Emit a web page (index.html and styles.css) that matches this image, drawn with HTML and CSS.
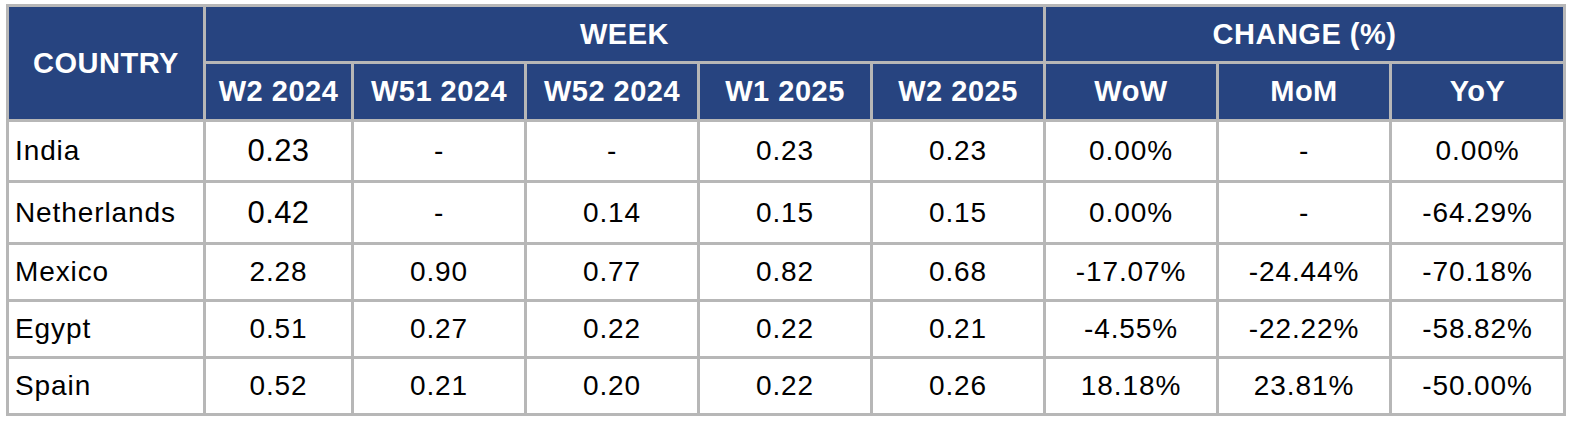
FILE: index.html
```html
<!DOCTYPE html>
<html lang="en">
<head>
<meta charset="utf-8">
<title>Weekly change by country</title>
<link rel="stylesheet" href="styles.css">
</head>
<body>
<table class="data">
  <colgroup>
    <col class="col-country">
    <col class="col-w1">
    <col class="col-w">
    <col class="col-w">
    <col class="col-w">
    <col class="col-w">
    <col class="col-w">
    <col class="col-w">
    <col class="col-last">
  </colgroup>
  <thead>
    <tr class="hr1">
      <th rowspan="2" class="country-h">COUNTRY</th>
      <th colspan="5">WEEK</th>
      <th colspan="3">CHANGE (%)</th>
    </tr>
    <tr class="hr2">
      <th>W2 2024</th>
      <th>W51 2024</th>
      <th>W52 2024</th>
      <th>W1 2025</th>
      <th>W2 2025</th>
      <th>WoW</th>
      <th>MoM</th>
      <th>YoY</th>
    </tr>
  </thead>
  <tbody>
    <tr class="tall-a">
      <td class="name">India</td>
      <td class="big">0.23</td>
      <td>-</td>
      <td>-</td>
      <td>0.23</td>
      <td>0.23</td>
      <td>0.00%</td>
      <td>-</td>
      <td>0.00%</td>
    </tr>
    <tr class="tall-b">
      <td class="name">Netherlands</td>
      <td class="big">0.42</td>
      <td>-</td>
      <td>0.14</td>
      <td>0.15</td>
      <td>0.15</td>
      <td>0.00%</td>
      <td>-</td>
      <td>-64.29%</td>
    </tr>
    <tr>
      <td class="name">Mexico</td>
      <td>2.28</td>
      <td>0.90</td>
      <td>0.77</td>
      <td>0.82</td>
      <td>0.68</td>
      <td>-17.07%</td>
      <td>-24.44%</td>
      <td>-70.18%</td>
    </tr>
    <tr>
      <td class="name">Egypt</td>
      <td>0.51</td>
      <td>0.27</td>
      <td>0.22</td>
      <td>0.22</td>
      <td>0.21</td>
      <td>-4.55%</td>
      <td>-22.22%</td>
      <td>-58.82%</td>
    </tr>
    <tr>
      <td class="name">Spain</td>
      <td>0.52</td>
      <td>0.21</td>
      <td>0.20</td>
      <td>0.22</td>
      <td>0.26</td>
      <td>18.18%</td>
      <td>23.81%</td>
      <td>-50.00%</td>
    </tr>
  </tbody>
</table>
</body>
</html>
```

FILE: styles.css
```css
html, body {
  background: #ffffff;
}
body {
  margin: 0;
  padding: 4px 0 0 6px;
  font-family: "Liberation Sans", Arial, sans-serif;
}
.data {
  border-collapse: collapse;
  table-layout: fixed;
  width: 1554px;
}
.col-country { width: 197px; }
.col-w1 { width: 148px; }
.col-w { width: 173px; }
.col-last { width: 174px; }

.data th,
.data td {
  border: 3px solid #b7b7b7;
  padding: 0 6px;
  text-align: center;
  vertical-align: middle;
  white-space: nowrap;
}
.data th {
  background: #274480;
  color: #ffffff;
  font-weight: bold;
  font-size: 29px;
  letter-spacing: 0.5px;
}
.data td {
  color: #000000;
  font-size: 28px;
  letter-spacing: 0.9px;
}
.data td.name {
  text-align: left;
}
.data td.big {
  font-size: 31px;
  letter-spacing: 0.4px;
}
.hr1 { height: 57px; }
.hr2 { height: 58px; }
.data tbody tr { height: 57px; }
.data tbody tr.tall-a { height: 61px; }
.data tbody tr.tall-b { height: 62px; }
```
